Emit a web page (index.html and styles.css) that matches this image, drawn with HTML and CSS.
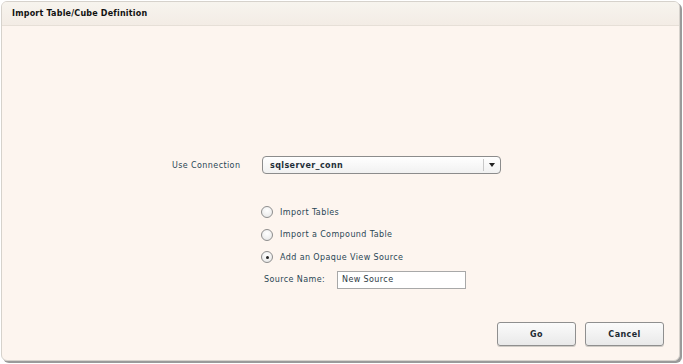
FILE: index.html
```html
<!DOCTYPE html>
<html lang="en">
<head>
    <meta charset="UTF-8">
    <title>Import Table/Cube Definition</title>
    <link rel="stylesheet" href="styles.css">
</head>
<body>
    <div class="dialog">
        <div class="dialog-header">Import Table/Cube Definition</div>
        <div class="dialog-body">
            <div class="conn-row">
                <span class="label">Use Connection</span>
                <div class="select">
                    <span class="select-value">sqlserver_conn</span>
                    <span class="select-arrow"></span>
                </div>
            </div>

            <div class="options">
                <label class="option"><span class="radio"></span>Import Tables</label>
                <label class="option"><span class="radio"></span>Import a Compound Table</label>
                <label class="option"><span class="radio checked"></span>Add an Opaque View Source</label>
                <div class="source-row">
                    <span class="label">Source Name:</span>
                    <div class="text-input">New Source</div>
                </div>
            </div>

            <div class="footer">
                <button class="btn">Go</button>
                <button class="btn">Cancel</button>
            </div>
        </div>
    </div>
</body>
</html>
```

FILE: styles.css
```css
* {
    margin: 0;
    padding: 0;
    box-sizing: border-box;
}

body {
    font-family: 'DejaVu Sans', Verdana, sans-serif;
    font-size: 8px;
    letter-spacing: 0.4px;
    background: #ffffff;
    width: 683px;
    height: 364px;
    overflow: hidden;
}

.dialog {
    margin: 1px 3px 0 1px;
    height: 360px;
    display: flex;
    flex-direction: column;
    border: 1px solid #d6d2cc;
    border-radius: 6px;
    background: #fdf5ef;
    box-shadow: 2px 2px 0 #9a9a9a;
    overflow: hidden;
}

.dialog-header {
    height: 24px;
    padding: 0 10px;
    display: flex;
    align-items: center;
    font-weight: bold;
    letter-spacing: 0.2px;
    color: #111;
    background: linear-gradient(#f7f4ee, #f3ece5);
    border-bottom: 1px solid #e6dfd7;
}

.dialog-body {
    flex: 1;
    display: flex;
    flex-direction: column;
    padding: 130px 15px 14px 0;
}

.label {
    color: #2a4655;
}

.conn-row {
    display: flex;
    align-items: center;
    padding-left: 170px;
}

.conn-row .label {
    width: 90px;
}

.select {
    width: 239px;
    height: 18px;
    display: flex;
    align-items: center;
    border: 1px solid #8c8c8c;
    border-radius: 4px;
    background: linear-gradient(#ffffff, #f1f1f1);
}

.select-value {
    flex: 1;
    padding-left: 7px;
    font-weight: bold;
    color: #1f2f38;
}

.select-arrow {
    width: 17px;
    height: 12px;
    border-left: 1px solid #c8c8c8;
    position: relative;
}

.select-arrow::after {
    content: "";
    position: absolute;
    left: 5px;
    top: 4px;
    border-left: 3px solid transparent;
    border-right: 3px solid transparent;
    border-top: 4px solid #222;
}

.options {
    margin: 27px 0 0 259px;
    display: flex;
    flex-direction: column;
}

.option {
    display: flex;
    align-items: center;
    height: 22.5px;
    color: #2a4655;
}

.radio {
    width: 12px;
    height: 12px;
    margin-right: 7px;
    border: 1px solid #8d8d8d;
    border-radius: 50%;
    background: radial-gradient(circle at 50% 35%, #ffffff, #e4e4e4);
    display: flex;
    align-items: center;
    justify-content: center;
}

.radio.checked::after {
    content: "";
    width: 3px;
    height: 3px;
    border-radius: 50%;
    background: #222;
}

.source-row {
    display: flex;
    align-items: center;
    margin-top: 2px;
    padding-left: 3px;
}

.source-row .label {
    width: 73px;
}

.text-input {
    width: 129px;
    height: 18px;
    display: flex;
    align-items: center;
    padding-left: 4px;
    border: 1px solid #a8a8a8;
    background: #fff;
    color: #2e3a42;
}

.footer {
    margin-top: auto;
    display: flex;
    justify-content: flex-end;
    gap: 9px;
}

.btn {
    width: 79px;
    height: 24px;
    font-family: inherit;
    font-size: 8px;
    font-weight: bold;
    letter-spacing: 0.4px;
    color: #1d2a32;
    border: 1px solid #8f8f8f;
    border-radius: 3px;
    background: linear-gradient(#fbfbfb, #e9e9e9);
    box-shadow: 0 1px 0 #d0ccc6;
}
```
